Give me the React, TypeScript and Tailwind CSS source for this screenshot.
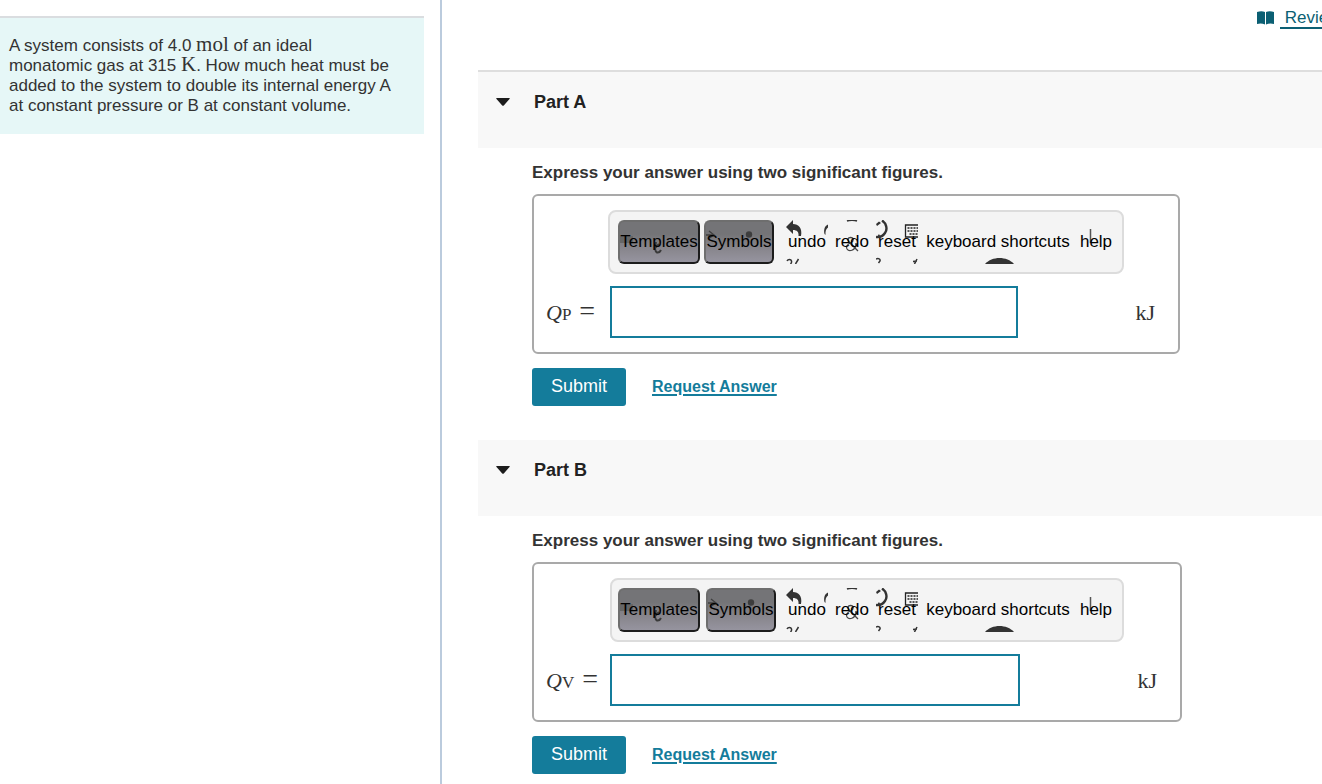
import React, { useState } from 'react';
import { cva } from 'class-variance-authority';
import clsx from 'clsx';

interface PartProps {
  id: string;
  title: string;
  subscript: string;
  first?: boolean;
}

const toolButton = cva('relative h-11 shrink-0 text-[17px] leading-5 text-black whitespace-nowrap', {
  variants: {
    kind: {
      raised:
        'rounded-md border-2 border-t-[#6e6e6e] border-l-[#6e6e6e] border-r-[#1c1c1c] border-b-[#1c1c1c] bg-linear-to-b from-[#747477] from-30% via-[#858389] via-60% to-[#96949f]',
      plain: 'overflow-hidden',
    },
  },
});

function TemplatesMark() {
  return (
    <svg className="absolute inset-0" width="78" height="40" fill="none" aria-hidden="true">
      <path d="M0 14H13V21H0Z" fill="#666" />
      <path d="M36 20C35 24 34 29 37 30.500C39 31 40 30 41 28M35 26L39 22" stroke="#3a3a3a" strokeWidth="2" />
    </svg>
  );
}

function SymbolsMark() {
  return (
    <svg className="absolute inset-0" width="66" height="40" fill="none" aria-hidden="true">
      <path d="M0 13H8M3 9L8 13L2 17" stroke="#3f3f3f" strokeWidth="1.300" />
      <circle cx="43" cy="12.500" r="3.200" fill="#3d3d3d" />
    </svg>
  );
}

function UndoMark() {
  return (
    <svg className="absolute inset-0" width="42" height="44" fill="none" aria-hidden="true">
      <path d="M0 7L7 0V4C12.500 4 16.500 8 15 16H12.500C13 12 11 10 7 10V14Z" fill="#333" />
      <path d="M42 4.500C38.500 6 37.500 10 38.500 14L39.500 15C39.300 11 40 9 42 7.500Z" fill="#333" />
      <path d="M1 41C2 39 5 39 5.500 41C5.800 42.500 5 43.500 4.500 44M12.500 39L9.500 44" stroke="#333" strokeWidth="1.500" />
    </svg>
  );
}

function RedoMark() {
  return (
    <svg className="absolute inset-0" width="48" height="44" fill="none" aria-hidden="true">
      <path d="M19 1C21 0 27 0 29 1" stroke="#333" strokeWidth="1.500" />
      <path
        d="M30 31L21 22C19 19 20 17.500 22.500 17.500C26 17.500 26 21 23 22.500C18 25 18 27 19 29C21 32 27 31 28.500 24M27 24H30"
        stroke="#444"
        strokeWidth="1.300"
      />
    </svg>
  );
}

function ResetMark() {
  return (
    <svg className="absolute inset-0" width="42" height="44" fill="none" aria-hidden="true">
      <path d="M6 .5C10 3 12 9 9 13C7 16 4 17.500 0 17" stroke="#333" strokeWidth="2.400" />
      <path d="M0 4L3 1.500L5 3L1 6ZM0 18L3 14L5 18Z" fill="#333" />
      <path d="M42 5H29.500V17H42" stroke="#222" strokeWidth="1.300" />
      <path d="M31.500 8H42M31.500 11H42M33.500 14H42" stroke="#222" strokeWidth="1.700" strokeDasharray="2 1" />
      <path d="M0 39C2.500 38 4.500 39 4 41L2.500 43M41 39L38.500 44M37 41.500L41 41" stroke="#333" strokeWidth="1.500" />
    </svg>
  );
}

function KeyboardMark() {
  return (
    <svg className="absolute inset-0" width="160" height="44" aria-hidden="true">
      <path d="M67 44C74 36 89 36 96 44Z" fill="#333" />
    </svg>
  );
}

function HelpMark() {
  return (
    <svg className="absolute inset-0" width="36" height="44" aria-hidden="true">
      <path d="M12.500 9V23" stroke="#555" strokeWidth="1.500" />
    </svg>
  );
}

const tools = [
  { label: 'undo', width: 'w-[42px]', Mark: UndoMark },
  { label: 'redo', width: 'w-12', Mark: RedoMark },
  { label: 'reset', width: 'w-[42px]', Mark: ResetMark },
  { label: 'keyboard shortcuts', width: 'w-40', Mark: KeyboardMark },
  { label: 'help', width: 'w-9', Mark: HelpMark },
];

function Toolbar({ wide }: { wide?: boolean }) {
  return (
    <div
      className={clsx(
        'flex rounded-lg border-2 border-[#dcdcdc] bg-[#f4f4f4] py-2 pr-2',
        wide ? 'ml-[74px] w-[516px] pl-2' : 'ml-[76px] w-[514px] pl-1.5'
      )}
    >
      <button type="button" className={clsx(toolButton({ kind: 'raised' }), 'w-[82px]')}>
        <TemplatesMark />
        <span className="relative flex justify-center">Templates</span>
      </button>
      <button
        type="button"
        className={clsx(toolButton({ kind: 'raised' }), 'w-[70px]', wide ? 'ml-1 mr-3' : 'ml-1.5 mr-2.5')}
      >
        <SymbolsMark />
        <span className="relative flex justify-center">Symbols</span>
      </button>
      {tools.map(({ label, width, Mark }) => (
        <button key={label} type="button" className={clsx(toolButton({ kind: 'plain' }), width)}>
          <Mark />
          <span className="relative flex justify-center">{label}</span>
        </button>
      ))}
    </div>
  );
}

function Part({ id, title, subscript, first }: PartProps) {
  const [answer, setAnswer] = useState('');
  const [open, setOpen] = useState(true);

  return (
    <section>
      <header className={clsx('bg-[#f8f8f8] pt-5 pb-9', first && 'border-t-2 border-[#dedede]')}>
        <button
          type="button"
          onClick={() => setOpen(!open)}
          aria-expanded={open}
          className="flex items-center pl-[18px] text-[18px] leading-5 font-bold text-[#222]"
        >
          <svg width="14" height="8" className="mr-6" aria-hidden="true">
            <path d="M1 0H13Q14.500 0 13.500 1L8 7.300Q7 8.300 6 7.300L.5 1Q-.5 0 1 0Z" fill="#1c1c1c" />
          </svg>
          {title}
        </button>
      </header>

      {open && (
        <form className={clsx('pl-[54px]', first ? 'pb-[34px]' : 'pb-2.5')} onSubmit={(e) => e.preventDefault()}>
          <p className="pt-[15px] pb-[11px] text-[17px] leading-5 font-bold text-[#333]">
            Express your answer using two significant figures.
          </p>

          <div
            className={clsx(
              'rounded-md border-2 border-[#a9a9a9] bg-white py-3.5',
              first ? 'max-w-[648px]' : 'max-w-[650px]'
            )}
          >
            <Toolbar wide={first} />
            <div className="mt-3 flex items-center font-['Liberation_Serif',serif] text-[22px] text-[#333]">
              <label htmlFor={id} className="flex w-[76px] shrink-0 items-baseline pl-3 whitespace-nowrap">
                <i>Q</i>
                <span className="text-[17px]">{subscript}</span>
                <span className="ml-2 text-[28px] leading-5">=</span>
              </label>
              <input
                id={id}
                type="text"
                value={answer}
                onChange={(e) => setAnswer(e.target.value)}
                className="h-[52px] min-w-0 flex-1 border-2 border-[#147c9b] bg-white px-3 outline-none"
              />
              <span className="w-40 shrink-0 pr-[23px] text-right">kJ</span>
            </div>
          </div>

          <div className="mt-3.5 flex items-center">
            <button type="submit" className="h-[38px] w-[94px] rounded-[3px] bg-[#147c9b] pb-0.5 text-[18px] text-white">
              Submit
            </button>
            <a href="#" className="ml-[26px] text-[16px] leading-5 font-bold text-[#147c9b] underline decoration-2 underline-offset-2">
              Request Answer
            </a>
          </div>
        </form>
      )}
    </section>
  );
}

export default function App() {
  return (
    <div className="flex min-h-screen bg-white font-['Liberation_Sans',Arial,sans-serif]">
      <aside className="w-[442px] shrink-0 border-r-2 border-[#bbcbdd] pt-4 pr-4">
        <div className="border-t-2 border-[#dadde0] bg-[#e6f7f7] pt-[18px] pr-4 pb-[18px] pl-[9px]">
          <p className="text-[17px] leading-5 text-[#333]">
            A system consists of 4.0{' '}
            <span className="font-['Liberation_Serif',serif] text-[21px] leading-4">mol</span> of an ideal
            <br />
            monatomic gas at 315{' '}
            <span className="font-['Liberation_Serif',serif] text-[21px] leading-4">K</span>. How much heat must be
            added to the system to double its internal energy A at constant pressure or B at constant volume.
          </p>
        </div>
      </aside>

      <main className="min-w-0 flex-1 overflow-hidden pl-9">
        <div className="flex h-[70px] items-start pt-2">
          <div className="ml-auto flex w-[65px] shrink-0 items-center whitespace-nowrap text-[#0b5f73]">
            <svg width="17" height="14" className="mr-1.5 shrink-0" aria-hidden="true">
              <path d="M0 1Q4.500-.5 8 1V13.500Q4.500 12 0 13ZM9 1Q12.500-.5 17 1V13Q12.500 12 9 13.500Z" fill="currentColor" />
            </svg>
            <a href="#" className="text-[17px] leading-5 whitespace-pre underline decoration-2 underline-offset-4"> Review</a>
          </div>
        </div>

        <Part id="part-a" title="Part A" subscript="P" first />
        <Part id="part-b" title="Part B" subscript="V" />
      </main>
    </div>
  );
}
